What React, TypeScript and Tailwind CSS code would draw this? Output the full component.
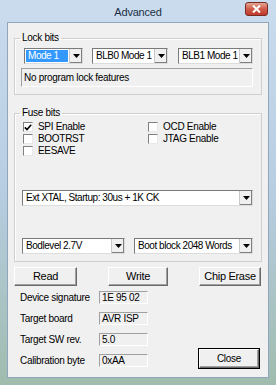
import React from "react";

function Arrow() {
  return (
    <div className="flex h-full w-[13px] items-center justify-center border-l border-l-[#c8c8c8] bg-[#f0f0f0] shadow-[inset_-1px_-1px_0_#808080]">
      <svg width="7" height="4" viewBox="0 0 7 4">
        <path d="M0 0h7L3.5 4z" fill="#000" />
      </svg>
    </div>
  );
}

function Combo({ text, w, selected }: { text: string; w: string; selected?: boolean }) {
  return (
    <div className={`flex h-[16px] ${w} border border-t-[#7a7a7a] border-l-[#7a7a7a] border-b-[#dcdcdc] border-r-[#dcdcdc] bg-white tracking-[-0.45px]`}>
      <div className="flex flex-1 items-center overflow-hidden p-[1px]">
        <span className={`flex h-full flex-1 items-center whitespace-nowrap pl-[2px] leading-none ${selected ? "bg-[#3399ff] text-white" : ""}`}>
          {text}
        </span>
      </div>
      <Arrow />
    </div>
  );
}

function Check({ label, checked }: { label: string; checked?: boolean }) {
  return (
    <div className="flex h-[12px] items-center gap-[5px]">
      <div className="flex h-[10px] w-[10px] items-center justify-center border border-t-[#808080] border-l-[#808080] border-b-[#e8e8e8] border-r-[#e8e8e8] bg-white">
        {checked && (
          <svg width="8" height="7" viewBox="0 0 8 7">
            <path d="M0.8 3.4L3 5.6 7.2 0.8" stroke="#000" strokeWidth="1.6" fill="none" />
          </svg>
        )}
      </div>
      <span className="whitespace-nowrap leading-none">{label}</span>
    </div>
  );
}

function Btn({ label, w }: { label: string; w: string }) {
  return (
    <button className={`flex h-[19px] ${w} items-center justify-center whitespace-nowrap border border-t-white border-l-white border-b-[#6a6a6a] border-r-[#6a6a6a] bg-[#f0f0f0] leading-none shadow-[inset_-1px_-1px_0_#a0a0a0]`}>
      {label}
    </button>
  );
}

function Field({ text, w, h }: { text: string; w: string; h: string }) {
  return (
    <div className={`flex ${h} ${w} items-center whitespace-nowrap border border-t-[#a0a0a0] border-l-[#a0a0a0] border-b-white border-r-white pl-[2px] leading-none`}>
      {text}
    </div>
  );
}

export default function App() {
  return (
    <div className="flex h-[385px] w-[276px] flex-col bg-gradient-to-b from-[#cadcee] via-[#b7cde2] to-[#9fbcae] font-['Liberation_Sans',Arial,sans-serif] text-[10px] tracking-[-0.3px] text-black">
      {/* Title bar */}
      <div className="grid h-[22px] grid-cols-[1fr_auto_1fr] items-start">
        <div />
        <div className="pt-[4px] text-[11px] tracking-[-0.2px] text-[#1e2f45]">Advanced</div>
        <div className="flex justify-end pr-[8px] pt-[2px]">
          <div className="flex h-[14px] w-[23px] items-center justify-center rounded-[3px] border border-[#7a2c24] bg-gradient-to-b from-[#e4a595] via-[#cf5a48] to-[#c0392b]">
            <svg width="9" height="8" viewBox="0 0 9 8">
              <path d="M1 0.5l7 7M8 0.5l-7 7" stroke="#fff" strokeWidth="2" />
            </svg>
          </div>
        </div>
      </div>

      {/* Dialog body */}
      <div className="mx-[7px] mb-[7px] flex flex-1 flex-col border border-[#8fa6bc] bg-[#f0f0f0] px-[6px] pt-[9px]">
        <fieldset className="w-[248px] border border-[#cfcfcf] px-0 pb-[7px] shadow-[inset_1px_1px_0_#fff]">
          <legend className="ml-[5px] h-[12px] px-[2px] leading-[12px]">Lock bits</legend>
          <div className="ml-[9px] mt-[4px] flex">
            <Combo text="Mode 1" w="w-[59px]" selected />
            <div className="ml-[9px]">
              <Combo text="BLB0 Mode 1" w="w-[76px]" />
            </div>
            <div className="ml-[10px]">
              <Combo text="BLB1 Mode 1" w="w-[75px]" />
            </div>
          </div>
          <div className="ml-[6px] mt-[4px]">
            <Field text="No program lock features" w="w-[232px]" h="h-[19px]" />
          </div>
        </fieldset>

        <fieldset className="mt-[12px] w-[248px] border border-[#cfcfcf] px-0 pb-[7px] shadow-[inset_1px_1px_0_#fff]">
          <legend className="ml-[5px] h-[12px] px-[2px] leading-[12px]">Fuse bits</legend>
          <div className="ml-[8px] mt-[2px] grid grid-cols-[125px_1fr]">
            <div className="flex flex-col">
              <Check label="SPI Enable" checked />
              <Check label="BOOTRST" />
              <Check label="EESAVE" />
            </div>
            <div className="flex flex-col">
              <Check label="OCD Enable" />
              <Check label="JTAG Enable" />
            </div>
          </div>
          <div className="ml-[7px] mt-[33px]">
            <Combo text="Ext XTAL, Startup: 30us + 1K CK" w="w-[231px]" />
          </div>
          <div className="ml-[7px] mt-[32px] flex gap-[9px]">
            <Combo text="Bodlevel 2.7V" w="w-[103px]" />
            <Combo text="Boot block 2048 Words" w="w-[119px]" />
          </div>
        </fieldset>

        <div className="mt-[5px] flex w-[247px] justify-between text-[11px]">
          <Btn label="Read" w="w-[63px]" />
          <Btn label="Write" w="w-[60px]" />
          <Btn label="Chip Erase" w="w-[62px]" />
        </div>

        <div className="mt-[5px] flex">
          <div className="ml-[6px] flex flex-col gap-[8px]">
            {[
              ["Device signature", "1E 95 02"],
              ["Target board", "AVR ISP"],
              ["Target SW rev.", "5.0"],
              ["Calibration byte", "0xAA"],
            ].map(([label, value]) => (
              <div key={label} className="flex h-[13px] items-center">
                <span className="w-[79px] whitespace-nowrap leading-none">{label}</span>
                <Field text={value} w="w-[49px]" h="h-[13px]" />
              </div>
            ))}
          </div>
          <div className="ml-[50px] mt-[57px]">
            <div className="border border-black">
              <Btn label="Close" w="w-[60px]" />
            </div>
          </div>
        </div>
      </div>
    </div>
  );
}
